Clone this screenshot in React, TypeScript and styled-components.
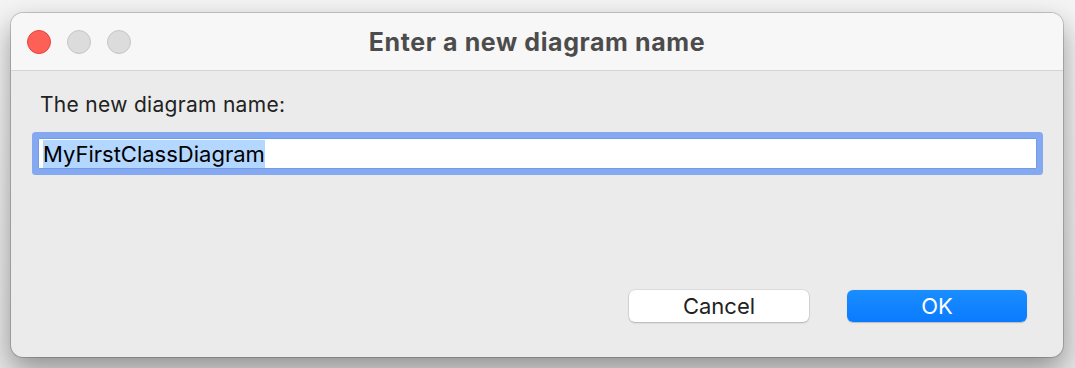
import styled, { createGlobalStyle } from 'styled-components';

const GlobalStyle = createGlobalStyle`
  html, body {
    margin: 0;
    padding: 0;
    background: #f2f2f2;
    font-family: Inter, "Liberation Sans", sans-serif;
  }
`;

const Stage = styled.div`
  width: 1075px;
  height: 368px;
  padding: 13px 0 0 11px;
  box-sizing: border-box;
  overflow: hidden;
  background: linear-gradient(#f4f4f4, #e6e6e6);
`;

const Window = styled.div`
  width: 1052px;
  height: 344px;
  border-radius: 12px;
  overflow: hidden;
  display: flex;
  flex-direction: column;
  background: #ebebeb;
  box-shadow: 0 0 0 1px rgba(0, 0, 0, 0.18), 0 12px 28px rgba(0, 0, 0, 0.38);
`;

const TitleBar = styled.div`
  height: 57px;
  flex: none;
  display: grid;
  grid-template-columns: 1fr auto 1fr;
  align-items: center;
  padding: 0 16px;
  background: #f7f7f7;
  border-bottom: 1px solid #d4d4d4;
`;

const Lights = styled.div`
  display: flex;
  gap: 16px;
`;

const Light = styled.span<{ $color: string; $edge: string }>`
  width: 22px;
  height: 22px;
  border-radius: 50%;
  background: ${p => p.$color};
  border: 1px solid ${p => p.$edge};
`;

const Title = styled.div`
  font-size: 25px;
  font-weight: 700;
  letter-spacing: 0.6px;
  color: #4c4c4c;
`;

const Body = styled.div`
  flex: 1;
  display: flex;
  flex-direction: column;
  padding: 22px 26px 35px 27px;
`;

const Label = styled.div`
  font-size: 21px;
  line-height: 24px;
  letter-spacing: 0.3px;
  color: #222;
  padding-left: 2px;
  margin-bottom: 21px;
`;

const Field = styled.div`
  height: 31px;
  background: #fff;
  display: flex;
  align-items: center;
  padding-left: 5px;
  border-radius: 1px;
  box-shadow: inset 0 0 0 1px #739be9, 0 0 0 6px #84a9f0;
`;

const Selected = styled.span`
  font-size: 22px;
  color: #000;
  background: #b3d7ff;
  line-height: 28px;
`;

const Buttons = styled.div`
  margin-top: auto;
  display: flex;
  justify-content: flex-end;
  gap: 38px;
  padding-right: 10px;
`;

const Button = styled.button<{ $primary?: boolean }>`
  width: 180px;
  height: 32px;
  border: none;
  border-radius: 6px;
  font-family: inherit;
  font-size: 22px;
  color: ${p => (p.$primary ? '#fff' : '#222')};
  background: ${p => (p.$primary ? 'linear-gradient(#1a8dff, #0a7bff)' : '#fff')};
  box-shadow: ${p =>
    p.$primary
      ? '0 0.5px 1px rgba(0,0,0,0.2)'
      : '0 0 0 0.5px rgba(0,0,0,0.12), 0 1px 2px rgba(0,0,0,0.2)'};
`;

export default function App() {
  return (
    <Stage>
      <GlobalStyle />
      <Window>
        <TitleBar>
          <Lights>
            <Light $color="#fe5f57" $edge="#e2463f" />
            <Light $color="#dcdcdc" $edge="#c6c6c6" />
            <Light $color="#dcdcdc" $edge="#c6c6c6" />
          </Lights>
          <Title>Enter a new diagram name</Title>
          <span />
        </TitleBar>
        <Body>
          <Label>The new diagram name:</Label>
          <Field>
            <Selected>MyFirstClassDiagram</Selected>
          </Field>
          <Buttons>
            <Button>Cancel</Button>
            <Button $primary>OK</Button>
          </Buttons>
        </Body>
      </Window>
    </Stage>
  );
}
